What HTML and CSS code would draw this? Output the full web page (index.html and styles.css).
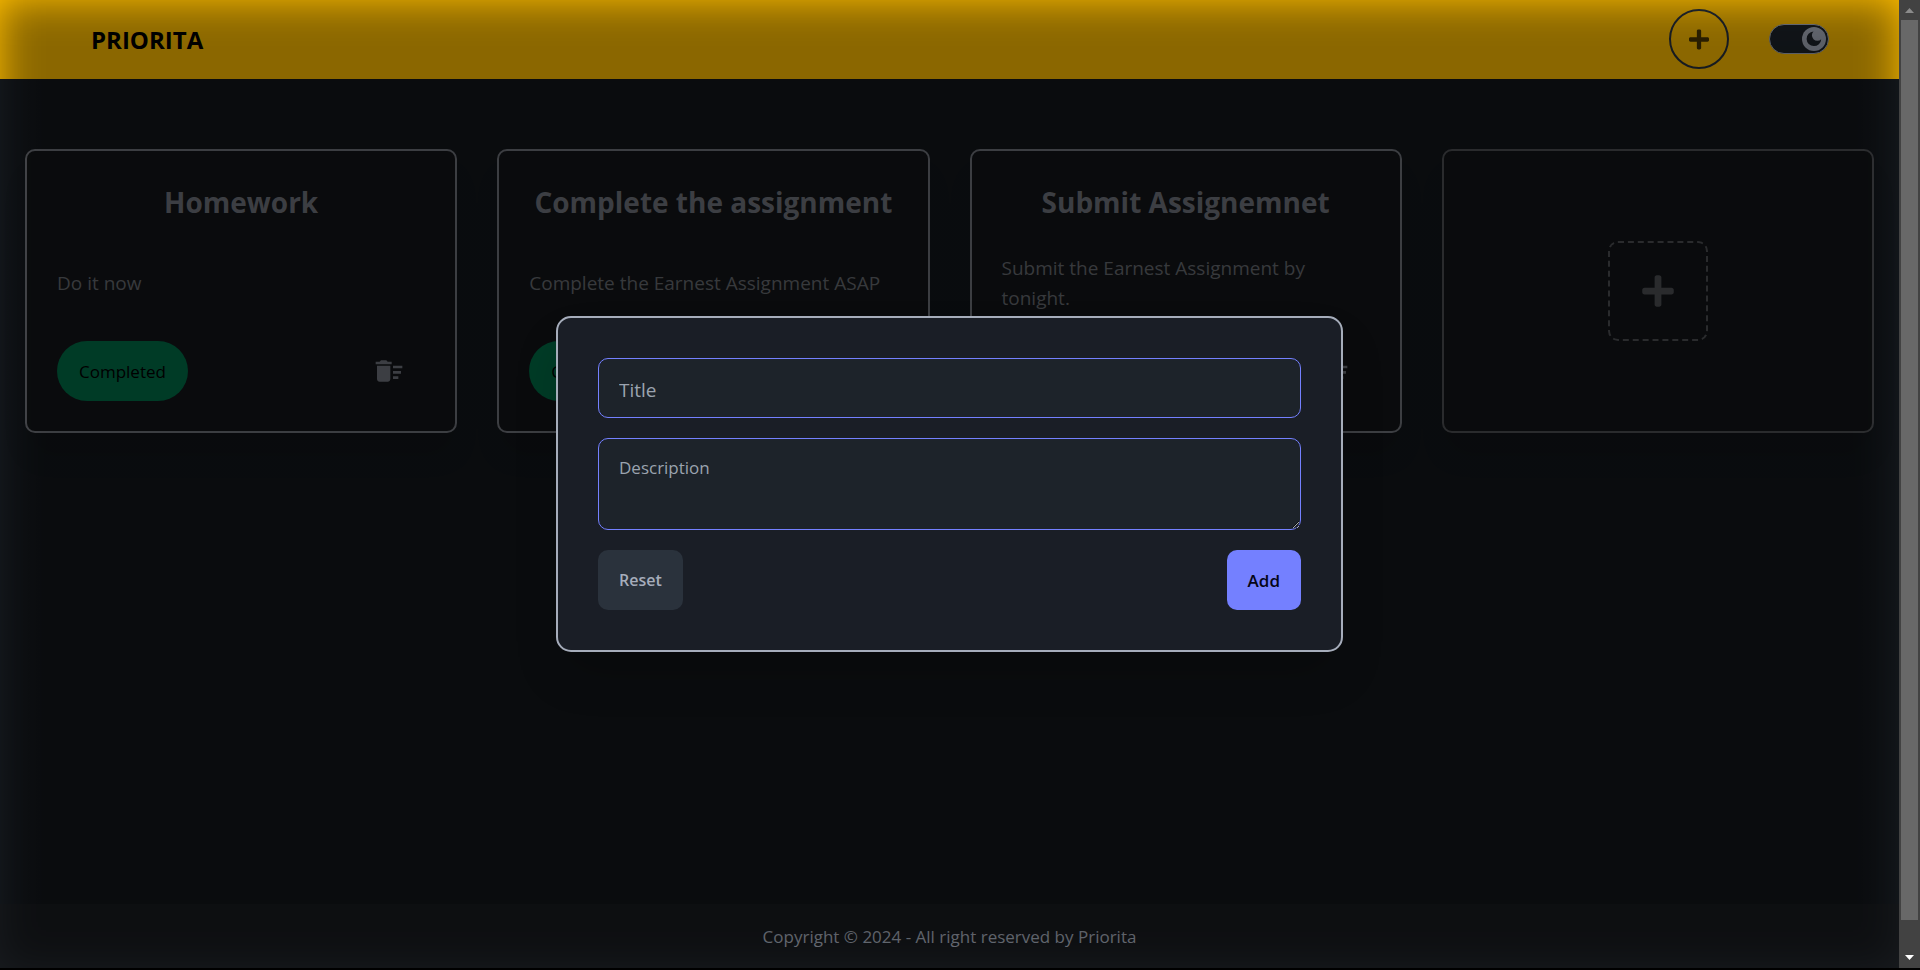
FILE: index.html
```html
<!DOCTYPE html>
<html lang="en">
<head>
<meta charset="utf-8">
<title>Priorita</title>
<link rel="stylesheet" href="styles.css">
</head>
<body>
<svg class="sprite" aria-hidden="true">
  <symbol id="plus" viewBox="0 0 448 512"><path d="M416 208H272V64c0-17.67-14.33-32-32-32h-32c-17.67 0-32 14.33-32 32v144H32c-17.67 0-32 14.33-32 32v32c0 17.67 14.33 32 32 32h144v144c0 17.67 14.33 32 32 32h32c17.67 0 32-14.33 32-32V304h144c17.67 0 32-14.33 32-32v-32c0-17.67-14.33-32-32-32z"/></symbol>
  <symbol id="sweep" viewBox="0 0 24 24"><path d="M15 16h4v2h-4zm0-8h7v2h-7zm0 4h6v2h-6zM3 18c0 1.1.9 2 2 2h6c1.1 0 2-.9 2-2V8H3v10zM14 5h-3l-1-1H6L5 5H2v2h12z"/></symbol>
</svg>
<div class="page">
  <header class="navbar">
    <a class="brand" href="#">PRIORITA</a>
    <div class="nav-actions">
      <button class="add-round" type="button" aria-label="Add task"><svg class="icon-plus"><use href="#plus"/></svg></button>
      <label class="theme">
        <input class="theme-input" type="checkbox" checked aria-label="Dark theme">
        <svg class="theme-knob" viewBox="0 0 24 24"><circle class="knob-face" cx="12" cy="12" r="12"/><path class="knob-moon" d="M11.500 4.500A7.300 7.300 0 1 0 19.200 12.200A5 5 0 0 1 11.500 4.500Z"/></svg>
      </label>
    </div>
  </header>
  <main class="board">
    <article class="card">
      <h2 class="card-title">Homework</h2>
      <p class="card-text">Do it now</p>
      <div class="card-actions">
        <button class="status" type="button">Completed</button>
        <button class="delete" type="button" aria-label="Delete"><svg class="icon-sweep"><use href="#sweep"/></svg></button>
      </div>
    </article>
    <article class="card">
      <h2 class="card-title">Complete the assignment</h2>
      <p class="card-text">Complete the Earnest Assignment ASAP</p>
      <div class="card-actions">
        <button class="status" type="button">Completed</button>
        <button class="delete" type="button" aria-label="Delete"><svg class="icon-sweep"><use href="#sweep"/></svg></button>
      </div>
    </article>
    <article class="card">
      <h2 class="card-title">Submit Assignemnet</h2>
      <p class="card-text">Submit the Earnest Assignment by tonight.</p>
      <div class="card-actions">
        <button class="status" type="button">Completed</button>
        <button class="delete" type="button" aria-label="Delete"><svg class="icon-sweep"><use href="#sweep"/></svg></button>
      </div>
    </article>
    <article class="card card-new">
      <button class="add-box" type="button" aria-label="New task"><svg class="icon-plus-large"><use href="#plus"/></svg></button>
    </article>
  </main>
  <footer class="footer">Copyright © 2024 - All right reserved by Priorita</footer>
  <div class="backdrop"></div>
  <div class="modal-layer">
    <form class="modal" role="dialog" aria-label="Add task">
      <input class="field title-field" type="text" placeholder="Title" aria-label="Title">
      <textarea class="field text-field" placeholder="Description" aria-label="Description"></textarea>
      <div class="modal-actions">
        <button class="btn" type="reset">Reset</button>
        <button class="btn btn-primary" type="button">Add</button>
      </div>
    </form>
  </div>
</div>
<div class="scrollbar" aria-hidden="true">
  <svg class="arrow arrow-up" viewBox="0 0 9 5"><path d="M0 5 4.500 0 9 5z"/></svg>
  <div class="thumb"></div>
  <svg class="arrow arrow-down" viewBox="0 0 9 5"><path d="M0 0 4.500 5 9 0z"/></svg>
</div>
</body>
</html>
```
FILE: styles.css
```css
* { box-sizing: border-box; }

body {
  margin: 0;
  height: 100vh;
  display: grid;
  grid-template-columns: 1fr 21px;
  border-bottom: 2px solid #000;
  background: #1d232a;
  color: #a6adbb;
  font-family: "Open Sans", "Noto Sans", sans-serif;
  font-size: 17px;
  overflow: hidden;
}

button, input, textarea { font: inherit; }
button { cursor: pointer; }
.sprite { position: absolute; width: 0; height: 0; }

.page {
  position: relative;
  display: flex;
  flex-direction: column;
  min-width: 0;
  overflow: hidden;
}

.navbar {
  display: flex;
  align-items: flex-start;
  justify-content: space-between;
  height: 79px;
  padding: 9px 70px 0 91px;
  background: #ffbe00;
}
.brand {
  color: #000;
  font-size: 24px;
  font-weight: 700;
  line-height: 62px;
  text-decoration: none;
}
.nav-actions { display: flex; align-items: center; gap: 40px; }
.add-round {
  display: flex;
  align-items: center;
  justify-content: center;
  width: 60px;
  height: 60px;
  padding: 0;
  border: 2px solid #2a323c;
  border-radius: 50%;
  background: none;
  fill: #4a3600;
}
.icon-plus { width: 20px; height: 23px; }
.theme { position: relative; display: flex; }
.theme-input {
  appearance: none;
  width: 60px;
  height: 30px;
  margin: 0;
  border: 1px solid #a6adbb;
  border-radius: 15px;
  background: #1d232a;
}
.theme-knob {
  position: absolute;
  top: 3px;
  right: 3px;
  width: 24px;
  height: 24px;
}
.knob-face { fill: #a6adbb; }
.knob-moon { fill: #1d232a; }

.board {
  flex: 1;
  display: grid;
  grid-template-columns: repeat(4, 1fr);
  align-content: start;
  gap: 40px;
  padding: 70px 25px;
  background: linear-gradient(90deg, rgba(0,0,0,.2), rgba(0,0,0,.36) 45px, rgba(0,0,0,.36) calc(100% - 45px), rgba(0,0,0,.2));
}
.card {
  display: flex;
  flex-direction: column;
  gap: 30px;
  padding: 30px;
  border: 2px solid #6f7279;
  border-radius: 10px;
  background: #131518;
  box-shadow: 0 25px 30px -6px rgba(0,0,0,.1);
}
.card-title {
  margin: 0;
  color: #6f737b;
  font-size: 28px;
  font-weight: 700;
  line-height: 42px;
  text-align: center;
  white-space: nowrap;
}
.card-text {
  display: flex;
  align-items: center;
  min-height: 60px;
  margin: 0;
  color: #66696f;
  font-size: 19px;
  line-height: 30px;
}
.card-actions {
  display: flex;
  align-items: center;
  justify-content: space-between;
  margin-top: -2px;
}
.status {
  height: 60px;
  padding: 0 22px;
  border: 0;
  border-radius: 30px;
  background: #006c47;
  color: #000;
  font-weight: 500;
}
.delete {
  display: flex;
  padding: 14px 20px;
  border: 0;
  background: none;
  fill: #6f737b;
}
.icon-sweep { width: 32px; height: 32px; }
.card-new {
  align-items: center;
  justify-content: center;
  border-color: #4e5054;
}
.add-box {
  display: flex;
  align-items: center;
  justify-content: center;
  width: 100px;
  height: 100px;
  border: 2px dashed #4e5054;
  border-radius: 10px;
  background: none;
  fill: #4e5054;
}
.icon-plus-large { width: 32px; height: 36px; }

.footer {
  padding: 21px 20px 19px;
  background: #191c20;
  line-height: 24px;
  text-align: center;
}

.backdrop {
  position: absolute;
  inset: 0;
  background: rgba(0,0,0,.455);
  filter: blur(20px);
}
.modal-layer {
  position: absolute;
  inset: 0;
  display: flex;
  align-items: center;
  justify-content: center;
}
.modal {
  display: flex;
  flex-direction: column;
  gap: 20px;
  width: 787px;
  padding: 40px;
  border: 2px solid #a6adbb;
  border-radius: 15px;
  background: #1a1e26;
  box-shadow: 0 25px 50px -12px rgba(0,0,0,.25);
}
.field {
  width: 100%;
  border: 1px solid #7480ff;
  border-radius: 10px;
  background: #1d232a;
  color: #a6adbb;
  outline: 0;
}
.field::placeholder { color: #9ba3af; }
.title-field { height: 60px; padding: 4px 20px 0; font-size: 19px; }
.text-field { height: 92px; padding: 17px 20px; line-height: 24px; font-size: 17px; }
.modal-actions { display: flex; justify-content: space-between; }
.btn {
  height: 60px;
  padding: 0 21px;
  border: 0;
  border-radius: 10px;
  background: #2a323c;
  color: #a6adbb;
  font-size: 16px;
  font-weight: 600;
}
.btn-primary { background: #7480ff; color: #050617; font-size: 17px; font-weight: 600; }

.scrollbar {
  display: flex;
  flex-direction: column;
  align-items: center;
  padding: 8px 2px;
  background: #424242;
}
.arrow { width: 9px; height: 5px; }
.arrow-up { fill: #8b8b8b; margin-bottom: 7px; }
.arrow-down { fill: #fff; margin-top: 35px; }
.thumb { flex: 1; width: 17px; background: #686868; }
```
